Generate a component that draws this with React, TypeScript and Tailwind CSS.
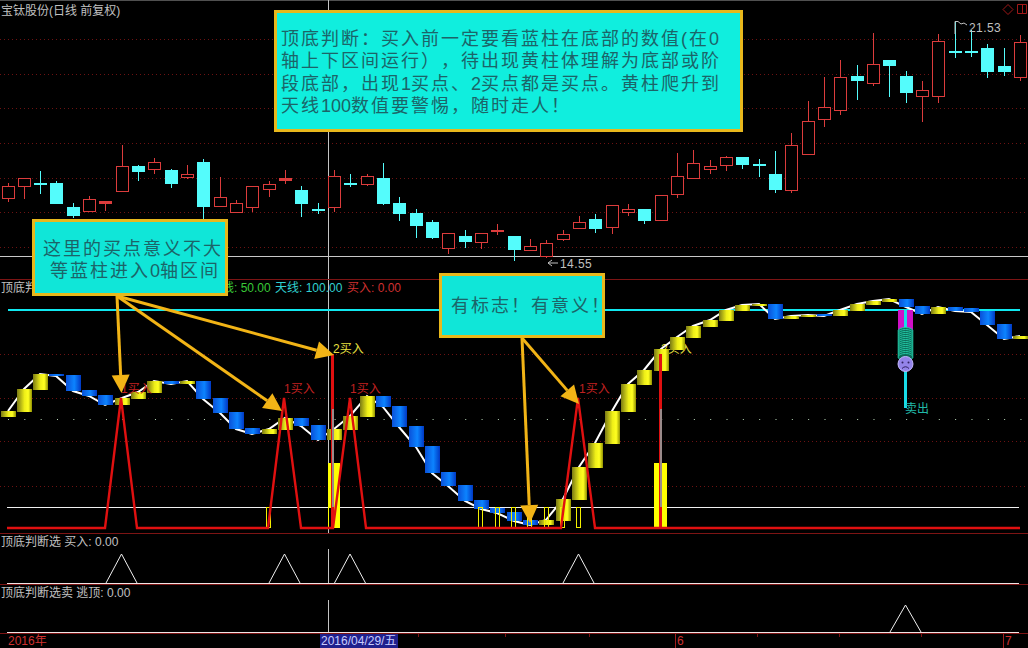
const STEP = 16.33;
const barX = (i: number) => Math.round(7.5 + STEP * i);

const GRID = "#6c1212";
const RED = "#dc3c3c";
const CYAN = "#54fcfc";
const LINE_RED = "#e01010";
const ORANGE = "#f2b416";

// [up?, bodyTop, bodyBottom, wickTop, wickBottom]
type Candle = [0 | 1, number, number, number, number];
const candles: Candle[] = [
    [1, 186, 198, 183, 202], [1, 178, 186, 178, 199], [0, 183, 184, 171, 194], [0, 183, 203, 181, 203],
    [0, 207, 215, 203, 218], [1, 199, 211, 196, 211], [1, 201, 203, 201, 211], [1, 166, 191, 145, 191],
    [0, 166, 171, 165, 181], [1, 162, 169, 158, 174], [0, 170, 183, 169, 188], [1, 174, 177, 165, 179],
    [0, 162, 206, 159, 219], [1, 197, 206, 177, 207], [1, 203, 212, 200, 213], [1, 186, 207, 186, 212],
    [1, 184, 189, 181, 197], [1, 178, 180, 170, 184], [0, 190, 203, 186, 217], [0, 209, 210, 203, 214],
    [1, 176, 207, 170, 212], [0, 183, 184, 174, 187], [1, 176, 184, 174, 186], [0, 178, 203, 163, 205],
    [0, 203, 213, 197, 221], [0, 213, 225, 209, 238], [0, 222, 237, 220, 239], [1, 233, 248, 233, 254],
    [0, 236, 241, 230, 248], [1, 233, 242, 233, 249], [1, 230, 231, 224, 235], [0, 236, 249, 236, 261],
    [1, 246, 250, 239, 250], [1, 243, 256, 240, 258], [1, 234, 239, 230, 241], [1, 222, 228, 216, 228],
    [0, 219, 228, 214, 233], [1, 205, 227, 205, 234], [1, 209, 212, 204, 216], [0, 209, 220, 209, 224],
    [1, 195, 220, 195, 220], [1, 176, 194, 153, 198], [1, 163, 178, 150, 178], [1, 166, 169, 160, 174],
    [1, 157, 165, 156, 171], [0, 157, 164, 157, 169], [0, 164, 165, 159, 177], [0, 174, 189, 151, 193],
    [1, 145, 190, 133, 193], [1, 121, 154, 101, 154], [1, 107, 119, 77, 127], [1, 77, 110, 60, 115],
    [0, 76, 80, 65, 100], [1, 64, 83, 33, 86], [0, 60, 65, 60, 97], [0, 76, 92, 71, 103],
    [1, 90, 96, 81, 122], [1, 41, 96, 34, 103], [0, 51, 52, 21, 58], [0, 51, 52, 30, 57],
    [0, 48, 71, 44, 78], [0, 66, 71, 48, 76], [1, 42, 77, 35, 81],
];

// [yellow?, top, bottom]
type Block = [0 | 1, number, number];
const blocks: Block[] = [
    [1, 411, 417], [1, 389, 412], [1, 374, 390], [0, 374, 376], [0, 375, 391], [0, 390, 396], [0, 395, 405],
    [1, 398, 405], [1, 392, 399], [1, 381, 393], [0, 381, 384], [1, 381, 384], [0, 381, 399], [0, 398, 413],
    [0, 412, 429], [0, 428, 434], [1, 429, 434], [1, 418, 430], [0, 418, 426], [0, 425, 440], [1, 429, 440],
    [1, 416, 430], [1, 396, 417], [0, 396, 407], [0, 406, 427], [0, 426, 447], [0, 446, 473], [0, 472, 486],
    [0, 485, 501], [0, 500, 509], [0, 508, 513], [0, 512, 521], [0, 520, 525], [1, 520, 525], [1, 499, 521],
    [1, 467, 500], [1, 443, 468], [1, 411, 444], [1, 384, 412], [1, 370, 385], [1, 349, 371], [1, 337, 350],
    [1, 326, 338], [1, 320, 327], [1, 310, 321], [1, 305, 311], [1, 304, 306], [0, 304, 319], [1, 316, 319],
    [1, 315, 317], [0, 314, 316], [1, 310, 316], [1, 304, 311], [1, 301, 305], [1, 299, 302], [0, 299, 307],
    [0, 306, 314], [1, 307, 314], [0, 307, 311], [0, 308, 312], [0, 311, 325], [0, 324, 339], [1, 336, 339],
];

const closeLine = blocks.map(([y, t, b], i) => `${barX(i)},${y ? t : b}`).join(" ");

const buyLine =
    "7,528 105,528 121,398 137,528 268,528 284,398 301,528 333,528 350,398 366,528 561,528 578,398 595,528 1020,528";

const spring = [331, 333, 335, 337, 339, 341, 343, 345, 347, 349, 351, 353, 355, 357];

function Dots({ ys }: { ys: number[] }) {
    return (
        <>
            {ys.map(y => (
                <line key={y} x1={0} x2={1028} y1={y + 0.5} y2={y + 0.5} stroke={GRID} strokeDasharray="1 3" />
            ))}
        </>
    );
}

function CursorLine({ y1, y2 }: { y1: number; y2: number }) {
    return <line x1={328.5} x2={328.5} y1={y1} y2={y2} stroke="#c4c4c4" />;
}

function Arrow({ from, to }: { from: [number, number]; to: [number, number] }) {
    const dx = to[0] - from[0];
    const dy = to[1] - from[1];
    const len = Math.hypot(dx, dy);
    const ux = dx / len;
    const uy = dy / len;
    const bx = to[0] - ux * 18;
    const by = to[1] - uy * 18;
    const head = `${to[0]},${to[1]} ${bx - uy * 9},${by + ux * 9} ${bx + uy * 9},${by - ux * 9}`;
    return (
        <g>
            <line x1={from[0]} y1={from[1]} x2={bx} y2={by} stroke={ORANGE} strokeWidth={3} />
            <polygon points={head} fill={ORANGE} />
        </g>
    );
}

function MainChart() {
    return (
        <svg width={1028} height={279} viewBox="0 0 1028 279" className="block">
            <line x1={0} x2={1028} y1={0.5} y2={0.5} stroke="#505050" />
            <Dots ys={[39, 74, 108, 143, 178, 212, 247]} />
            <line x1={0} x2={1028} y1={256.5} y2={256.5} stroke="#c8c8c8" />
            <CursorLine y1={0} y2={279} />
            <g shapeRendering="crispEdges">
                {candles.map(([up, top, bottom, wickTop, wickBottom], i) => {
                    const x = barX(i);
                    const color = up ? RED : CYAN;
                    return (
                        <g key={i}>
                            <line x1={x + 0.5} x2={x + 0.5} y1={wickTop} y2={wickBottom} stroke={color} />
                            <rect
                                x={x - 6 + 0.5}
                                y={top + 0.5}
                                width={12}
                                height={bottom - top}
                                fill={up && bottom - top > 2 ? "#000" : color}
                                stroke={color}
                            />
                        </g>
                    );
                })}
            </g>
            <text x={1} y={15} fill="#c0c0c0" className="text-[12px]">宝钛股份(日线 前复权)</text>
            <path d="M955 34V21.5H958M958 21.5L961 24 L964 23 L967 25" fill="none" stroke="#c0c0c0" />
            <text x={969} y={32} fill="#c0c0c0" className="text-[12px] tracking-[0.4px]">21.53</text>
            <path d="M548 263H558M548 263L552 260M548 263L552 266" fill="none" stroke="#c0c0c0" />
            <text x={560} y={268} fill="#c0c0c0" className="text-[12px] tracking-[0.4px]">14.55</text>
            <path d="M1008 4.5L1013 9.5L1008 14.5L1003 9.5Z" fill="none" stroke="#a01818" />
            <path d="M1017.5 4.5H1026.5V13.5H1017.5ZM1022.5 4.5V13.5" fill="none" stroke="#a01818" />
        </svg>
    );
}

function IndicatorChart() {
    return (
        <svg width={1028} height={253} viewBox="0 280 1028 253" className="block">
            <defs>
                <linearGradient id="gold" x1="0" x2="1" y1="0" y2="0">
                    <stop offset="0" stopColor="#7a7a14" />
                    <stop offset="0.5" stopColor="#eeee18" />
                    <stop offset="0.75" stopColor="#ffff20" />
                    <stop offset="1" stopColor="#909000" />
                </linearGradient>
                <linearGradient id="blue" x1="0" x2="1" y1="0" y2="0">
                    <stop offset="0" stopColor="#0a50d8" />
                    <stop offset="0.55" stopColor="#0c84ff" />
                    <stop offset="1" stopColor="#0038c4" />
                </linearGradient>
            </defs>
            <Dots ys={[354, 398, 441, 486]} />
            {/* sparse dots on the 50 line */}
            <line x1={8} x2={1028} y1={419.5} y2={419.5} stroke="#b8d8b8" strokeDasharray="1 15.33" />
            <CursorLine y1={280} y2={533} />

            <line x1={8} x2={1020} y1={310} y2={310} stroke="#10e8f0" strokeWidth={2} />
            <line x1={7} x2={1019} y1={507.5} y2={507.5} stroke="#f0f0f0" />

            <text x={661} y={353} fill="#e8e040" className="text-[12px]">2买入</text>

            <polyline points={closeLine} fill="none" stroke="#fff" strokeWidth={2} />
            <g shapeRendering="crispEdges">
                {blocks.map(([yellow, top, bottom], i) => (
                    <rect
                        key={i}
                        x={barX(i) - 7}
                        y={top}
                        width={15}
                        height={bottom - top}
                        fill={yellow ? "url(#gold)" : "url(#blue)"}
                    />
                ))}
            </g>

            {/* volume-like yellow bars */}
            <g shapeRendering="crispEdges">
                {[268, 480, 497, 513, 529, 546, 562, 578].map(x => (
                    <rect key={x} x={x - 1.5} y={507.5} width={4} height={20} fill="none" stroke="#f4f000" />
                ))}
                <rect x={328} y={463} width={12} height={65} fill="#ffff00" />
                <rect x={329} y={508} width={3} height={19} fill="#000" />
                <rect x={654} y={463} width={13} height={65} fill="#ffff00" />
            </g>

            <polyline points={buyLine} fill="none" stroke={LINE_RED} strokeWidth={2.4} />
            <rect x={331} y={354} width={3} height={174} fill={LINE_RED} />
            <rect x={332} y={409} width={2} height={98} fill="#9a8a8a" />
            <rect x={659} y={354} width={3} height={174} fill={LINE_RED} />
            <rect x={660} y={409} width={2} height={98} fill="#9a8a8a" />

            {/* sell signal stack */}
            <rect x={898} y={310} width={15} height={22} fill="#d010c8" />
            <line x1={905.5} x2={905.5} y1={309} y2={408} stroke="#18dce8" strokeWidth={3} />
            <g fill="#0c6a58" stroke="#22c8a4">
                {spring.map(y => (
                    <ellipse key={y} cx={905.5} cy={y} rx={7.5} ry={3.5} />
                ))}
            </g>
            <circle cx={905.5} cy={364} r={7.5} fill="#9484ea" stroke="#c4b8ff" />
            <circle cx={902.5} cy={362.5} r={1} fill="#302060" />
            <circle cx={908.5} cy={362.5} r={1} fill="#302060" />
            <path d="M902 368.5Q905.5 365 909 368.5" fill="none" stroke="#302060" />

            <g className="text-[12px]">
                <text x={1} y={292} fill="#c0c0c0">顶底判断</text>
                <text x={222} y={292} fill="#38c838">线: 50.00</text>
                <text x={275} y={292} fill="#30d0d0">天线: 100.00</text>
                <text x={347} y={292} fill="#d03030">买入: 0.00</text>
                <text x={121} y={393} fill="#c02020">1买入</text>
                <text x={284} y={393} fill="#c02020">1买入</text>
                <text x={350} y={393} fill="#c02020">1买入</text>
                <text x={579} y={393} fill="#c02020">1买入</text>
                <text x={333} y={353} fill="#e8e040">2买入</text>
                <text x={905} y={413} fill="#20b8a8">卖出</text>
            </g>
        </svg>
    );
}

function SignalPanel({ top, height, title, peaks }: { top: number; height: number; title: string; peaks: number[] }) {
    const base = top + height - 1;
    return (
        <svg width={1028} height={height} viewBox={`0 ${top} 1028 ${height}`} className="block">
            <CursorLine y1={top + 15} y2={base + 1} />
            <line x1={7} x2={1019} y1={base + 0.5} y2={base + 0.5} stroke="#f0e4e4" />
            {peaks.map(x => (
                <polyline
                    key={x}
                    points={`${x - 15.5},${base} ${x},${top + 20} ${x + 15.5},${base}`}
                    fill="none"
                    stroke="#f0f0f0"
                />
            ))}
            <text x={1} y={top + 12} fill="#c0c0c0" className="text-[12px]">{title}</text>
        </svg>
    );
}

function Num({ children }: { children: string }) {
    return <span className="tracking-normal">{children}</span>;
}

export default function App() {
    return (
        <div className="relative w-[1028px] h-[648px] overflow-hidden bg-black font-['Liberation_Sans','Noto_Sans_CJK_SC',sans-serif]">
            <div className="border-b border-[#7c1414]">
                <MainChart />
            </div>
            <div className="border-b border-[#7c1414]">
                <IndicatorChart />
            </div>
            <div className="border-b border-[#7c1414]">
                <SignalPanel top={534} height={50} title="顶底判断选 买入: 0.00" peaks={[121.5, 284.5, 350, 578.5]} />
            </div>
            <div className="border-b border-[#7c1414]">
                <SignalPanel top={585} height={48} title="顶底判断选卖 逃顶: 0.00" peaks={[905.5]} />
            </div>

            {/* date axis */}
            <svg width={1028} height={14} viewBox="0 634 1028 14" className="block">
                {[418, 505, 589, 757, 839, 921].map(x => (
                    <line key={x} x1={x + 0.5} x2={x + 0.5} y1={634} y2={637} stroke="#7c1414" />
                ))}
                {[675, 1003].map(x => (
                    <line key={x} x1={x + 0.5} x2={x + 0.5} y1={634} y2={648} stroke="#a01c1c" />
                ))}
                <rect x={320} y={634} width={78} height={14} fill="#20208c" />
                <g className="text-[12px]">
                    <text x={8} y={645} fill="#d03030">2016年</text>
                    <text x={321} y={645} fill="#c8ccff">2016/04/29/五</text>
                    <text x={677} y={645} fill="#d03030">6</text>
                    <text x={1005} y={645} fill="#d03030">7</text>
                </g>
            </svg>

            {/* annotations */}
            <svg width={1028} height={648} className="absolute inset-0 pointer-events-none">
                <Arrow from={[117, 296]} to={[121.5, 393]} />
                <Arrow from={[117, 296]} to={[282, 411]} />
                <Arrow from={[117, 296]} to={[334, 355]} />
                <Arrow from={[522, 338]} to={[530, 523]} />
                <Arrow from={[522, 338]} to={[579, 404]} />
            </svg>

            <div className="absolute left-[274px] top-[10px] w-[469px] h-[122px] border-[3px] border-[#e8b81c] bg-[#10eede] pl-[4px] pt-[15px] text-[18px] leading-[22.3px] tracking-[2px] text-[#1c6468] whitespace-nowrap [text-spacing-trim:space-all]">
                <div>顶底判断：买入前一定要看蓝柱在底部的数值(在<Num>0</Num></div>
                <div>轴上下区间运行），待出现黄柱体理解为底部或阶</div>
                <div>段底部，出现<Num>1</Num>买点、<Num>2</Num>买点都是买点。黄柱爬升到</div>
                <div>天线<Num>100</Num>数值要警惕，随时走人！</div>
            </div>

            <div className="absolute left-[32px] top-[219px] w-[196px] h-[77px] border-[3px] border-[#e8b81c] bg-[#10e6d8] pl-[8px] pt-[16px] text-[18px] leading-[22px] tracking-[2px] text-[#1c6468] whitespace-nowrap [text-spacing-trim:space-all]">
                <div>这里的买点意义不大</div>
                <div className="pl-[7px]">等蓝柱进入<Num>0</Num>轴区间</div>
            </div>

            <div className="absolute left-[439px] top-[273px] w-[166px] h-[65px] border-[3px] border-[#e8b81c] bg-[#10e6d8] pl-[9px] pt-[19px] text-[18px] leading-[22px] tracking-[2px] text-[#1c6468] whitespace-nowrap [text-spacing-trim:space-all]">
                有标志！有意义！
            </div>
        </div>
    );
}
